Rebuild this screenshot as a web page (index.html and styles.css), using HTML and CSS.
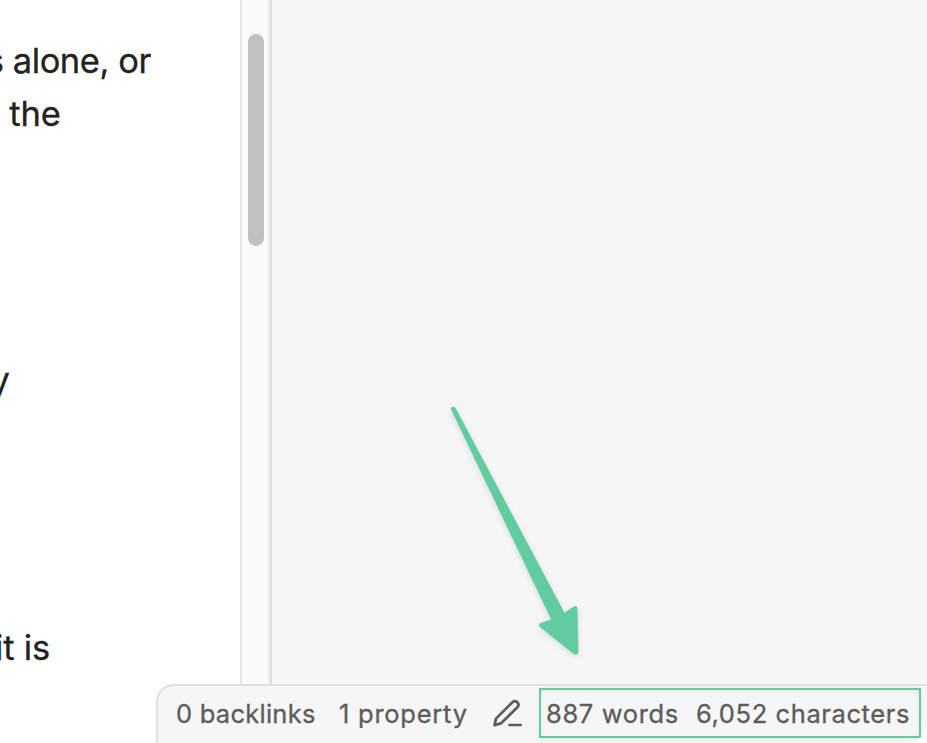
FILE: index.html
```html
<!DOCTYPE html>
<html lang="en">
<head>
<meta charset="utf-8">
<title>Word count</title>
<link rel="stylesheet" href="styles.css">
</head>
<body>
<div class="app">
  <main class="workspace">
    <section class="editor">
      <p class="line line-a">s alone, or</p>
      <p class="line line-b">the</p>
      <p class="line line-c">y</p>
      <p class="line line-d">it is</p>
    </section>
    <div class="scrollbar"><div class="thumb"></div></div>
    <aside class="sidebar"></aside>
  </main>
  <footer class="status">
    <span class="item backlinks">0 backlinks</span>
    <span class="item property">1 property</span>
    <svg class="pen" viewBox="0 0 32 32" aria-hidden="true">
      <path d="M17.5 27H28.8M2.5 27.2L4 20.6L20.7 4Q23 2.2 25.3 4.2Q27.6 6.5 25.6 9L9 25.4Z"/>
    </svg>
    <span class="counts"><span class="item words">887 words</span><span class="item chars">6,052 characters</span></span>
  </footer>
  <svg class="arrow" viewBox="0 0 170 275" aria-hidden="true">
    <path d="M21.2 14.8Q20.3 12.4 22.4 11.8Q24.7 11.2 25.7 13.3L134.5 217.7L143.3 211.7Q146.8 209.6 147.4 213L148.4 256.5Q148.2 261 143.7 259L110 232Q107.6 229 111 227.8L121.2 224.5Z"/>
  </svg>
  <svg class="corner" viewBox="0 0 20 20" aria-hidden="true"><path d="M20 0Q18 18 0 20H20Z"/></svg>
</div>
</body>
</html>
```
FILE: styles.css
```css
* { box-sizing: border-box; }
body { margin: 0; background: #fff; font-family: Inter, "Liberation Sans", sans-serif; -webkit-text-stroke: 0.3px currentColor; }
.app { position: relative; width: 927px; height: 743px; overflow: hidden; }
.workspace { display: flex; height: 743px; }
.editor { width: 240px; padding-top: 34px; overflow: hidden; color: #222; }
.line {
  display: flex; justify-content: flex-end; overflow: hidden;
  margin: 0; height: 53.4px; line-height: 53.4px; font-size: 34.5px; white-space: nowrap;
}
.line-a { width: 151px; letter-spacing: -0.45px; }
.line-b { width: 61px; }
.line-c { width: 10px; margin-top: 212.6px; }
.line-d { width: 50px; margin-top: 214.6px; letter-spacing: -0.2px; }
.scrollbar { width: 32px; padding: 34px 0 0 6px; background: #fafafa; border-left: 2px solid #e8e8e8; border-right: 2px solid #e0e0e0; box-shadow: inset -2px 0 #ececec; }
.thumb { width: 16px; height: 212px; border-radius: 8px; background: #c1c1c1; }
.sidebar { flex: 1; background: #f6f6f6; }
.status {
  position: absolute; left: 156px; top: 684px; width: 773px; height: 61px;
  display: flex; align-items: flex-start; padding: 2px 0 0 18px;
  background: #f6f6f6; border: 2px solid #e0e0e0; border-top-left-radius: 18px;
  color: #5c5c5c; font-size: 25.5px; line-height: 51px; white-space: nowrap;
}
.backlinks { width: 163px; letter-spacing: 0.25px; }
.property { width: 153px; letter-spacing: 0.75px; }
.pen { width: 32px; height: 32px; margin-top: 10px; fill: none; stroke: #5c5c5c; stroke-width: 2.7; stroke-linecap: round; stroke-linejoin: round; }
.counts {
  display: flex; width: 382px; height: 50px; margin: 0 0 0 15px; padding-left: 5px;
  border: 2px solid #62cba2; line-height: 48px;
  box-shadow: 0 1px 4px rgb(0 0 0 / 7%), inset 0 1px 4px rgb(0 0 0 / 7%);
}
.words { width: 150px; letter-spacing: 0.65px; }
.chars { letter-spacing: 0.6px; }
.arrow { position: absolute; left: 430px; top: 395px; width: 170px; height: 275px; fill: #61cba2; filter: drop-shadow(0 2px 3px rgb(0 0 0 / 12%)); }
.corner { position: absolute; right: 0; bottom: 0; width: 20px; height: 20px; fill: #fff; }
```
